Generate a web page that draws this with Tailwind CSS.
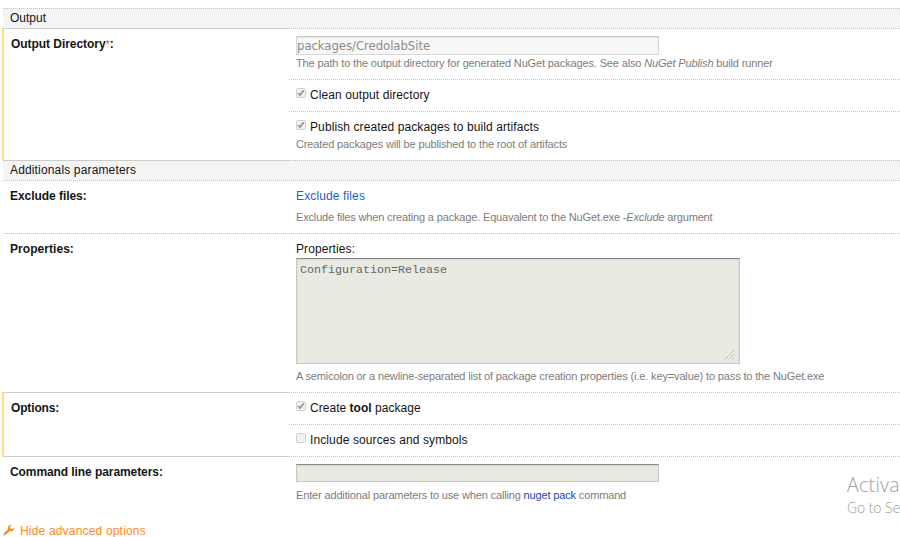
<!DOCTYPE html>
<html lang="en">
<head>
<meta charset="utf-8">
<title>NuGet Pack settings</title>
<script src="https://cdn.jsdelivr.net/npm/@tailwindcss/browser@4"></script>
</head>
<body class="relative h-[537px] w-[900px] overflow-hidden bg-white pt-2 font-['Liberation_Sans',Arial,sans-serif] text-[12px] leading-[16px] text-[#151515]">
<main class="flex flex-col">
  <h2 class="ml-[3px] h-5 border-t border-dotted border-[#c4c4c4] bg-[#f4f4f4] pl-[7px] pt-px font-normal"><span>Output</span></h2>

  <section class="flex h-[132px]">
    <div class="ml-[2px] w-[287px] border-l-2 border-l-[#ffdf7d]"><div class="-ml-px h-full border-t border-[#ccc] pl-2 pt-[7px] font-bold"><span class="tracking-[-0.05px]">Output Directory<span class="text-[11px] font-normal text-[#ff3b3b]">*</span>:</span></div></div>
    <div class="flex-1">
      <div class="h-[51px] border-t border-dotted border-[#c4c4c4] pl-[7px] pt-[7px]">
        <div class="h-[19px] w-[363px] border border-[#d9d9d9] border-t-[#c6c6c6] bg-[#f8f8f8] font-['DejaVu_Sans_Condensed','DejaVu_Sans',sans-serif] text-[13px] leading-[17px] tracking-[-0.05px] text-[#8c8c8c] shadow-[inset_0_1px_2px_#e4e4e4]"><span class="font-stretch-condensed">packages/CredolabSite</span></div>
        <p class="text-[11px] tracking-[-0.14px] text-[#7c7c7c]"><span>The path to the output directory for generated NuGet packages. See also <i>NuGet Publish</i> build runner</span></p>
      </div>
      <div class="flex h-8 border-t border-dotted border-[#c4c4c4] pl-[7px] pt-[7px]">
        <svg class="mt-px mr-1 h-[10px] w-[10px]" viewBox="0 0 10 10"><rect x=".5" y=".5" width="9" height="9" rx="1.3" fill="#f2f2f2" stroke="#d0d0d0"/><path d="M2.2 5l1.8 2L7.7 2.4" fill="none" stroke="#999" stroke-width="1.8"/></svg>
        <span class="tracking-[0.1px]">Clean output directory</span>
      </div>
      <div class="h-[49px] border-t border-dotted border-[#c4c4c4] pl-[7px] pt-[7px]">
        <div class="flex"><svg class="mt-px mr-1 h-[10px] w-[10px]" viewBox="0 0 10 10"><rect x=".5" y=".5" width="9" height="9" rx="1.3" fill="#f2f2f2" stroke="#d0d0d0"/><path d="M2.2 5l1.8 2L7.7 2.4" fill="none" stroke="#999" stroke-width="1.8"/></svg><span class="tracking-[0.1px]">Publish created packages to build artifacts</span></div>
        <p class="pt-px text-[11px] tracking-[-0.14px] text-[#7c7c7c]"><span>Created packages will be published to the root of artifacts</span></p>
      </div>
    </div>
  </section>

  <h2 class="ml-[3px] flex h-5 bg-[#f4f4f4] font-normal"><span class="w-[286px] border-t border-[#ccc] pl-[7px] pt-px tracking-[0.15px]">Additionals parameters</span><span class="flex-1 border-t border-dotted border-[#c4c4c4]"></span></h2>

  <section class="ml-[3px] flex h-[53px] border-t border-dotted border-[#c4c4c4] pt-[7px]">
    <div class="w-[286px] pl-[7px] font-bold"><span class="tracking-[-0.05px]">Exclude files:</span></div>
    <div class="pl-[7px]"><a class="block text-[#1f5fbf]"><span class="tracking-[0.13px]">Exclude files</span></a>
      <p class="pt-[5px] text-[11px] tracking-[-0.16px] text-[#7c7c7c]"><span>Exclude files when creating a package. Equavalent to the NuGet.exe <i>-Exclude</i> argument</span></p></div>
  </section>

  <section class="ml-[3px] flex h-[159px] border-t border-dotted border-[#c4c4c4] pt-[7px]">
    <div class="w-[286px] pl-[7px] font-bold"><span class="tracking-[0.05px]">Properties:</span></div>
    <div class="pl-[7px]"><div class="tracking-[0.1px]">Properties:</div>
      <div class="mt-px flex h-[106px] w-[444px] justify-between border border-[#c6c6c6] border-t-[#858585] bg-[#eaeae2] pl-[3px] pt-1 font-['Liberation_Mono','Courier_New',monospace] text-[11.67px] leading-[14px] text-[#666] shadow-[inset_0_1px_2px_#d8d8d0]"><span>Configuration=Release</span>
        <svg class="mr-1 mb-[3px] h-[11px] w-[11px] self-end" viewBox="0 0 11 11"><path d="M1 10.5L10.5 1M5 10.5L10.5 5M8.5 10.5l2-2" stroke="#b5b5ad" fill="none"/><path d="M2.5 10.5l8-8M6.5 10.5l4-4" stroke="#fafaf5" stroke-width=".7"/></svg></div>
      <p class="pt-1 text-[11px] tracking-[-0.145px] text-[#7c7c7c]"><span>A semicolon or a newline-separated list of package creation properties (i.e. key=value) to pass to the NuGet.exe</span></p></div>
  </section>

  <section class="flex h-16">
    <div class="ml-[2px] w-[287px] border-l-2 border-l-[#ffdf7d]"><div class="-ml-px h-full border-t border-[#ccc] pl-2 pt-[7px] font-bold"><span class="tracking-[-0.15px]">Options:</span></div></div>
    <div class="flex-1">
      <div class="flex h-8 border-t border-dotted border-[#c4c4c4] pl-[7px] pt-[7px]">
        <svg class="mt-px mr-1 h-[10px] w-[10px]" viewBox="0 0 10 10"><rect x=".5" y=".5" width="9" height="9" rx="1.3" fill="#f2f2f2" stroke="#d0d0d0"/><path d="M2.2 5l1.8 2L7.7 2.4" fill="none" stroke="#999" stroke-width="1.8"/></svg>
        <span class="tracking-[0.03px]">Create <b>tool</b> package</span>
      </div>
      <div class="flex h-8 border-t border-dotted border-[#c4c4c4] pl-[7px] pt-[7px]">
        <svg class="mt-px mr-1 h-[10px] w-[10px]" viewBox="0 0 10 10"><rect x=".5" y=".5" width="9" height="9" rx="1.3" fill="#f2f2f2" stroke="#d0d0d0"/></svg>
        <span class="tracking-[0.11px]">Include sources and symbols</span>
      </div>
    </div>
  </section>

  <section class="ml-[3px] flex h-[62px]">
    <div class="w-[286px] border-t border-[#ccc] pl-[7px] pt-[7px] font-bold"><span class="tracking-[-0.08px]">Command line parameters:</span></div>
    <div class="flex-1 border-t border-dotted border-[#c4c4c4] pl-[7px] pt-[7px]">
      <div class="h-[18px] w-[363px] border border-[#c6c6c6] border-t-[#858585] bg-[#eaeae2] shadow-[inset_0_1px_2px_#d8d8d0]"></div>
      <p class="pt-[5px] text-[11px] tracking-[-0.15px] text-[#7c7c7c]"><span>Enter additional parameters to use when calling <a class="text-[#1648b8]">nuget pack</a> command</span></p>
    </div>
  </section>

  <a class="ml-[3px] mt-[5px] flex items-start text-[#ff8a1c]">
    <svg class="mt-[2px] mr-[6px] h-[11px] w-[11px]" viewBox="0 0 11 11"><path d="M1.4 9.4L6.4 4.6" stroke="#ff8a1c" stroke-width="2.3" stroke-linecap="round"/><path d="M8.6.3A3 3 0 1 0 10.8 3L8.6 4 7.2 3.6 7 2z" fill="#ff8a1c"/><circle cx="1.7" cy="9.2" r=".5" fill="#fff"/></svg>
    <span class="tracking-[0.18px]">Hide advanced options</span>
  </a>
</main>
<aside class="absolute left-[847px] top-[473px] whitespace-nowrap font-['Open_Sans','Noto_Sans',sans-serif] font-light text-[#a0a0a0]">
  <div class="text-[19.5px] leading-6 tracking-[0.3px]">Activa</div>
  <div class="text-[14px] leading-[21px] tracking-[-0.1px]">Go to Se</div>
</aside>
</body>
</html>
